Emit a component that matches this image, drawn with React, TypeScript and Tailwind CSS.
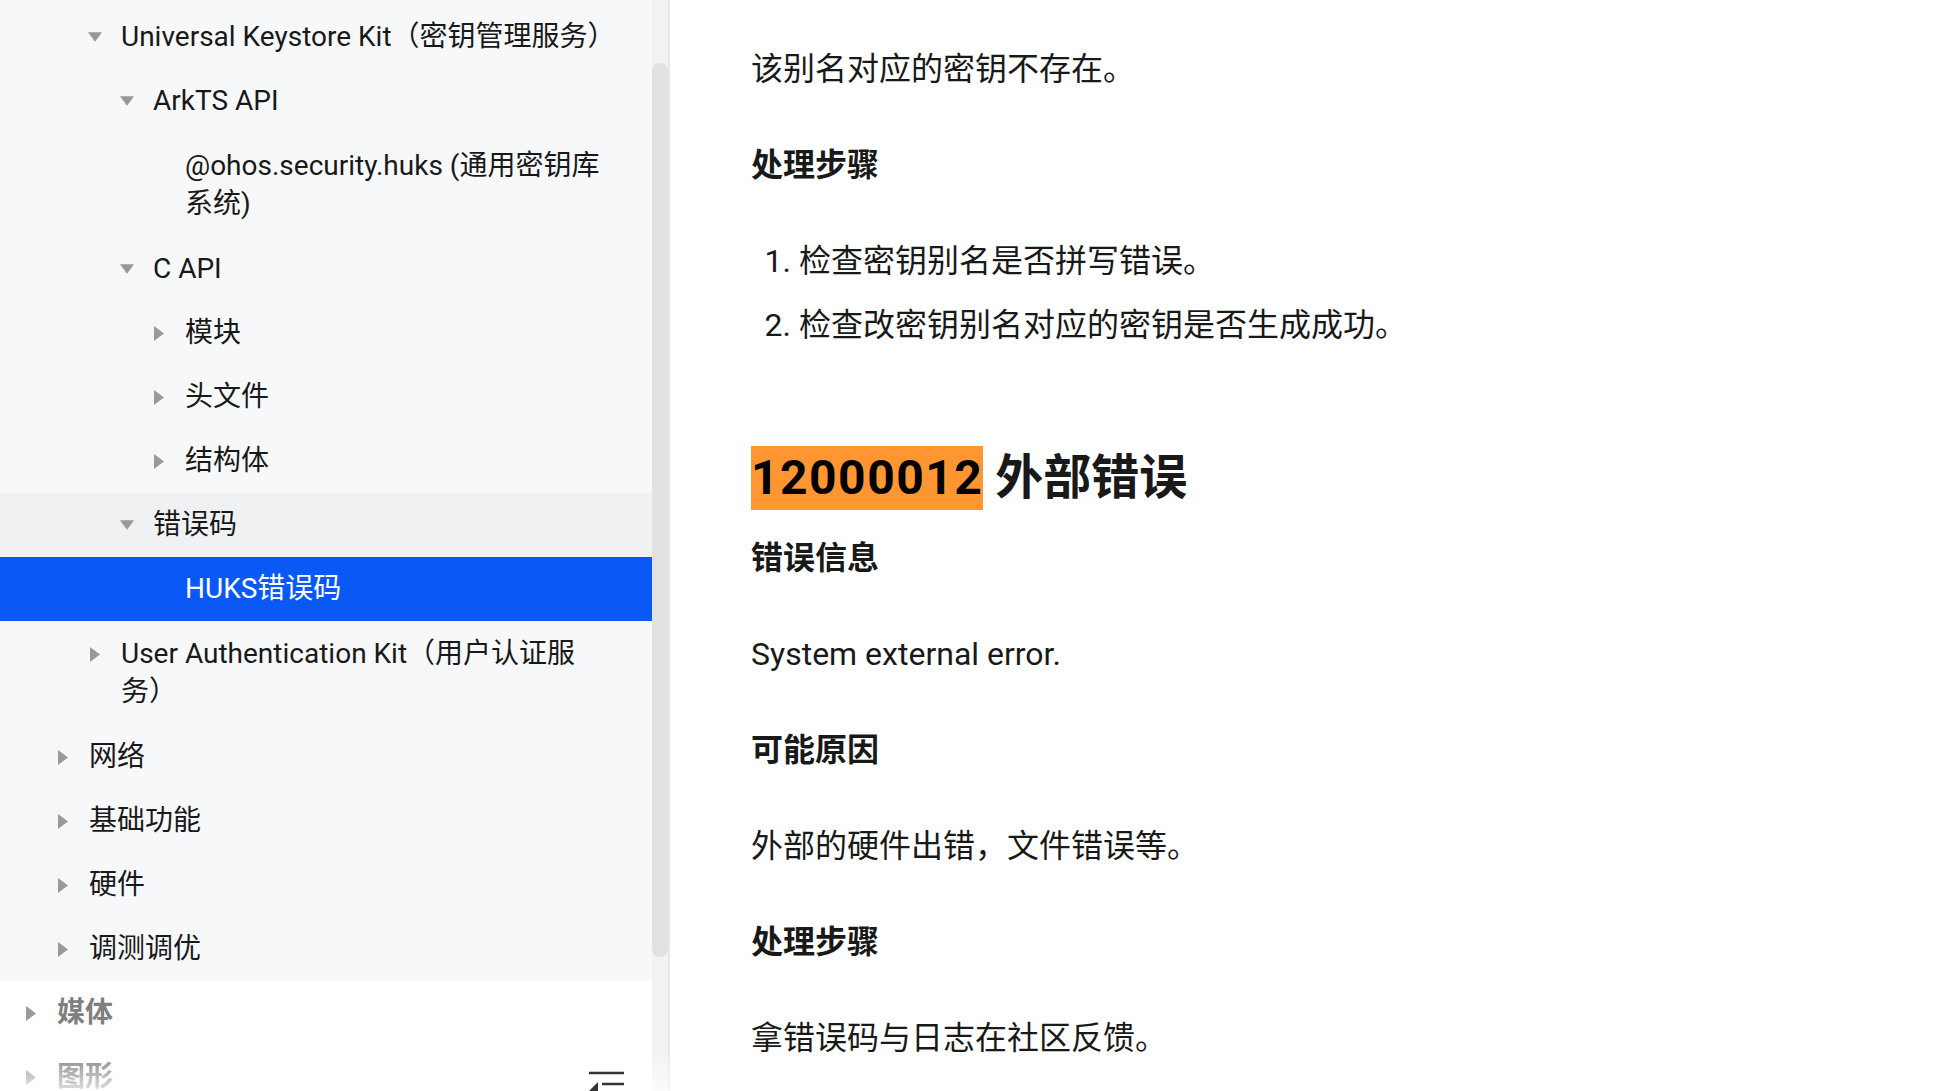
import React from 'react';

type Row = {
    level: 0 | 1 | 2 | 3 | 4;
    icon: 'down' | 'right' | null;
    lines: string[];
    state?: 'hover' | 'active';
    muted?: boolean;
};

const levelPad: Record<number, string> = {
    0: 'pl-[24px]',
    1: 'pl-[56px]',
    2: 'pl-[88px]',
    3: 'pl-[120px]',
    4: 'pl-[152px]',
};

const nestedRows: Row[] = [
    { level: 2, icon: 'down', lines: ['Universal Keystore Kit（密钥管理服务）'] },
    { level: 3, icon: 'down', lines: ['ArkTS API'] },
    { level: 4, icon: null, lines: ['@ohos.security.huks (通用密钥库', '系统)'] },
    { level: 3, icon: 'down', lines: ['C API'] },
    { level: 4, icon: 'right', lines: ['模块'] },
    { level: 4, icon: 'right', lines: ['头文件'] },
    { level: 4, icon: 'right', lines: ['结构体'] },
    { level: 3, icon: 'down', lines: ['错误码'], state: 'hover' },
    { level: 4, icon: null, lines: ['HUKS错误码'], state: 'active' },
    { level: 2, icon: 'right', lines: ['User Authentication Kit（用户认证服', '务）'] },
    { level: 1, icon: 'right', lines: ['网络'] },
    { level: 1, icon: 'right', lines: ['基础功能'] },
    { level: 1, icon: 'right', lines: ['硬件'] },
    { level: 1, icon: 'right', lines: ['调测调优'] },
];

const topRows: Row[] = [
    { level: 0, icon: 'right', lines: ['媒体'], muted: true },
    { level: 0, icon: 'right', lines: ['图形'], muted: true },
];

const Caret = ({ dir }: { dir: 'down' | 'right' }) =>
    dir === 'down' ? (
        <svg width="15" height="10" viewBox="0 0 15 10">
            <polygon points="0,0 15,0 7.5,10" fill="#999999" />
        </svg>
    ) : (
        <svg width="10" height="15" viewBox="0 0 10 15">
            <polygon points="0,0 10,7.5 0,15" fill="#999999" />
        </svg>
    );

const TreeRow = ({ row }: { row: Row }) => {
    const bg =
        row.state === 'active'
            ? 'bg-[#0a59f7] text-white'
            : row.state === 'hover'
              ? 'bg-[#f0f1f3] text-[#191919]'
              : row.muted
                ? 'text-[#7f7f7f] font-semibold'
                : 'text-[#191919]';
    const py = row.lines.length > 1 ? 'py-[14px]' : 'py-[13px]';
    return (
        <div className={`flex items-start pr-[24px] ${levelPad[row.level]} ${py} ${bg}`}>
            <div className="w-[14px] h-[38px] flex items-center justify-center shrink-0">
                {row.icon && <Caret dir={row.icon} />}
            </div>
            <div className="ml-[19px] text-[28px] leading-[38px] whitespace-nowrap">
                {row.lines.map((l, i) => (
                    <div key={i}>{l}</div>
                ))}
            </div>
        </div>
    );
};

const CollapseIcon = () => (
    <svg width="36" height="40" viewBox="0 0 36 40" fill="none">
        <line x1="1" y1="3" x2="36" y2="3" stroke="#333" strokeWidth="2.5" />
        <line x1="14" y1="14" x2="36" y2="14" stroke="#333" strokeWidth="2.5" />
        <polygon points="10,12 1,21 10,30" fill="#333" />
        <line x1="14" y1="28" x2="36" y2="28" stroke="#333" strokeWidth="2.5" />
        <line x1="1" y1="39" x2="36" y2="39" stroke="#333" strokeWidth="2.5" />
    </svg>
);

const Para = ({ children, className = '' }: { children: React.ReactNode; className?: string }) => (
    <p className={`text-[32px] leading-[48px] text-[#191919] ${className}`}>{children}</p>
);

const SubHead = ({ children, className = '' }: { children: React.ReactNode; className?: string }) => (
    <h4 className={`text-[32px] leading-[48px] font-bold text-[#191919] ${className}`}>{children}</h4>
);

export default function App() {
    return (
        <div className="w-full h-[1091px] overflow-hidden flex bg-white font-['Roboto','Noto_Sans_CJK_SC',sans-serif]">
            <div className="relative flex shrink-0 h-full">
                <aside className="w-[652px] h-full overflow-hidden flex flex-col">
                    <div className="bg-[#f7f8fa] pt-[5px]">
                        {nestedRows.map((r, i) => (
                            <TreeRow key={i} row={r} />
                        ))}
                    </div>
                    <div className="bg-white">
                        {topRows.map((r, i) => (
                            <TreeRow key={i} row={r} />
                        ))}
                    </div>
                </aside>
                <div className="w-[16px] h-full bg-[#f2f2f2] pt-[63px]">
                    <div className="h-[894px] w-[16px] rounded-full bg-[#e2e2e2]" />
                </div>
                <div className="w-[2px] h-full bg-[#e6e6e6]" />
                <div className="absolute left-0 right-0 bottom-0 h-[40px] bg-linear-to-b from-white/0 to-white/75 pointer-events-none" />
                <button className="absolute left-[588px] top-[1070px]">
                    <CollapseIcon />
                </button>
            </div>

            <main className="flex-1 pl-[81px] pt-[45px]">
                <Para>该别名对应的密钥不存在。</Para>
                <SubHead className="mt-[48px]">处理步骤</SubHead>
                <ol className="mt-[48px]">
                    <li className="flex text-[32px] leading-[48px] text-[#191919]">
                        <span className="w-[48px] text-right pr-[8px] shrink-0">1.</span>
                        <span>检查密钥别名是否拼写错误。</span>
                    </li>
                    <li className="flex mt-[16px] text-[32px] leading-[48px] text-[#191919]">
                        <span className="w-[48px] text-right pr-[8px] shrink-0">2.</span>
                        <span>检查改密钥别名对应的密钥是否生成成功。</span>
                    </li>
                </ol>
                <h2 className="mt-[97px] text-[48px] leading-[64px] font-bold text-[#191919] whitespace-nowrap">
                    <span className="inline-block h-[64px] bg-[#ff9632] text-black tracking-[1.5px]">12000012</span> 外部错误
                </h2>
                <SubHead className="mt-[24px]">错误信息</SubHead>
                <Para className="mt-[48px]">System external error.</Para>
                <SubHead className="mt-[48px]">可能原因</SubHead>
                <Para className="mt-[48px]">外部的硬件出错，文件错误等。</Para>
                <SubHead className="mt-[48px]">处理步骤</SubHead>
                <Para className="mt-[48px]">拿错误码与日志在社区反馈。</Para>
            </main>
        </div>
    );
}
